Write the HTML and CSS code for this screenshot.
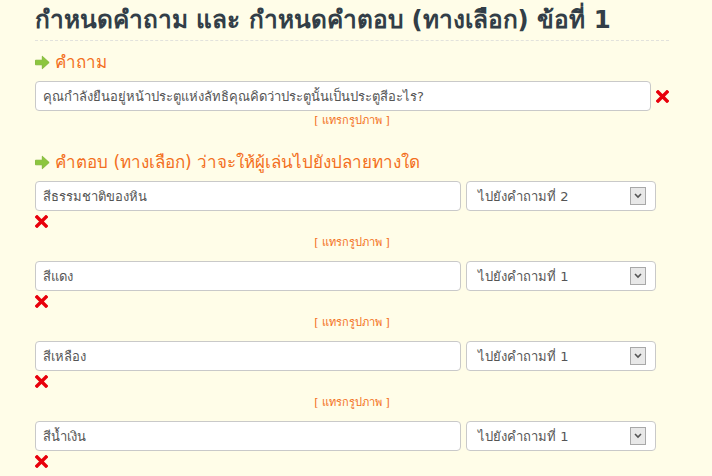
FILE: index.html
```html
<!DOCTYPE html>
<html lang="th">
<head>
    <meta charset="UTF-8">
    <title>กำหนดคำถาม</title>
    <link rel="stylesheet" href="styles.css">
</head>
<body>
    <div class="page">
        <h1 class="title">กำหนดคำถาม และ กำหนดคำตอบ (ทางเลือก) ข้อที่ 1</h1>

        <h2 class="section"><svg class="arrow" width="15" height="15" viewBox="0 0 15 15"><path d="M0.5 5.2h6.8V1.2l6.9 6.3-6.9 6.3V9.8H0.5z" fill="#8cc63e" stroke="#79b22f" stroke-width="0.8" stroke-linejoin="round"/></svg>คำถาม</h2>
        <div class="row">
            <div class="field wide">คุณกำลังยืนอยู่หน้าประตูแห่งลัทธิคุณคิดว่าประตูนั้นเป็นประตูสีอะไร?</div>
            <svg class="del" width="13" height="13" viewBox="0 0 13 13"><path d="M2 2l9 9M11 2l-9 9" stroke="#e8000b" stroke-width="3.4" stroke-linecap="square"/></svg>
        </div>
        <div class="insert">[ แทรกรูปภาพ ]</div>

        <h2 class="section second"><svg class="arrow" width="15" height="15" viewBox="0 0 15 15"><path d="M0.5 5.2h6.8V1.2l6.9 6.3-6.9 6.3V9.8H0.5z" fill="#8cc63e" stroke="#79b22f" stroke-width="0.8" stroke-linejoin="round"/></svg>คำตอบ (ทางเลือก) ว่าจะให้ผู้เล่นไปยังปลายทางใด</h2>

        <div class="answer">
            <div class="row">
                <div class="field">สีธรรมชาติของหิน</div>
                <div class="select">ไปยังคำถามที่ 2<span class="drop"><svg width="8" height="6" viewBox="0 0 8 6"><path d="M1 1l3 3 3-3" fill="none" stroke="#555" stroke-width="1.6"/></svg></span></div>
            </div>
            <svg class="del" width="13" height="13" viewBox="0 0 13 13"><path d="M2 2l9 9M11 2l-9 9" stroke="#e8000b" stroke-width="3.4" stroke-linecap="square"/></svg>
            <div class="insert">[ แทรกรูปภาพ ]</div>
        </div>

        <div class="answer">
            <div class="row">
                <div class="field">สีแดง</div>
                <div class="select">ไปยังคำถามที่ 1<span class="drop"><svg width="8" height="6" viewBox="0 0 8 6"><path d="M1 1l3 3 3-3" fill="none" stroke="#555" stroke-width="1.6"/></svg></span></div>
            </div>
            <svg class="del" width="13" height="13" viewBox="0 0 13 13"><path d="M2 2l9 9M11 2l-9 9" stroke="#e8000b" stroke-width="3.4" stroke-linecap="square"/></svg>
            <div class="insert">[ แทรกรูปภาพ ]</div>
        </div>

        <div class="answer">
            <div class="row">
                <div class="field">สีเหลือง</div>
                <div class="select">ไปยังคำถามที่ 1<span class="drop"><svg width="8" height="6" viewBox="0 0 8 6"><path d="M1 1l3 3 3-3" fill="none" stroke="#555" stroke-width="1.6"/></svg></span></div>
            </div>
            <svg class="del" width="13" height="13" viewBox="0 0 13 13"><path d="M2 2l9 9M11 2l-9 9" stroke="#e8000b" stroke-width="3.4" stroke-linecap="square"/></svg>
            <div class="insert">[ แทรกรูปภาพ ]</div>
        </div>

        <div class="answer">
            <div class="row">
                <div class="field">สีน้ำเงิน</div>
                <div class="select">ไปยังคำถามที่ 1<span class="drop"><svg width="8" height="6" viewBox="0 0 8 6"><path d="M1 1l3 3 3-3" fill="none" stroke="#555" stroke-width="1.6"/></svg></span></div>
            </div>
            <svg class="del" width="13" height="13" viewBox="0 0 13 13"><path d="M2 2l9 9M11 2l-9 9" stroke="#e8000b" stroke-width="3.4" stroke-linecap="square"/></svg>
        </div>
    </div>
</body>
</html>
```

FILE: styles.css
```css
body {
    margin: 0;
    background-color: #fffde8;
    font-family: "DejaVu Sans", "Noto Sans", sans-serif;
    overflow: hidden;
}

.page {
    width: 634px;
    padding: 6px 0 0 35px;
}

.title {
    margin: 0;
    padding-bottom: 6px;
    font-size: 24.4px;
    line-height: 28px;
    font-weight: bold;
    color: #323e47;
    border-bottom: 1px dashed #e2e2dc;
}

.section {
    display: flex;
    align-items: center;
    gap: 5px;
    margin: 10px 0 8px;
    font-size: 17px;
    line-height: 22px;
    font-weight: normal;
    color: #f36f21;
}

.section.second {
    margin: 22px 0 8px;
}

.row {
    display: flex;
    align-items: center;
    gap: 5px;
}

.field {
    box-sizing: border-box;
    width: 426px;
    height: 30px;
    padding: 0 7px;
    display: flex;
    align-items: center;
    background: #fff;
    border: 1px solid #c9c9c9;
    border-radius: 4px;
    font-size: 13px;
    color: #555;
}

.field.wide {
    width: 616px;
}

.select {
    box-sizing: border-box;
    width: 190px;
    height: 30px;
    padding: 0 9px 0 11px;
    display: flex;
    align-items: center;
    justify-content: space-between;
    background: #fff;
    border: 1px solid #c9c9c9;
    border-radius: 4px;
    font-size: 13px;
    color: #555;
}

.drop {
    box-sizing: border-box;
    width: 16px;
    height: 18px;
    display: flex;
    align-items: center;
    justify-content: center;
    background: #e8e8e8;
    border: 1px solid #a8a8a8;
}

.del {
    display: block;
}

.answer .del {
    margin-top: 4px;
}

.insert {
    text-align: center;
    font-size: 11px;
    line-height: 16px;
    color: #f36f21;
    margin-top: 2px;
}

.answer .insert {
    margin-top: 7px;
    margin-bottom: 10px;
}
```
